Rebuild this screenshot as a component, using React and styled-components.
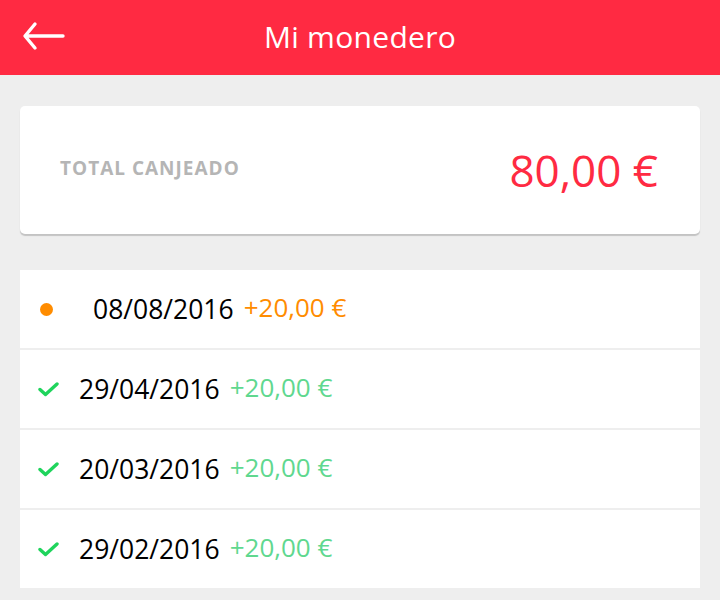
import React from 'react';
import styled, { createGlobalStyle } from 'styled-components';

const GlobalStyle = createGlobalStyle`
    html, body {
        margin: 0;
        padding: 0;
        background: #eeeeee;
    }
    body {
        font-family: "Open Sans", "Noto Sans", sans-serif;
    }
`;

const Page = styled.div`
    width: 720px;
    height: 600px;
    background: #eeeeee;
    overflow: hidden;
`;

const Header = styled.header`
    height: 75px;
    background: #ff2a42;
    display: flex;
    align-items: center;
    justify-content: center;
    position: relative;
`;

const BackButton = styled.button`
    position: absolute;
    left: 22px;
    top: 21px;
    padding: 0;
    border: 0;
    background: none;
    width: 44px;
    height: 30px;
    cursor: pointer;
`;

const Title = styled.h1`
    margin: 0 0 3px;
    color: #fff;
    font-weight: 400;
    font-size: 30px;
    letter-spacing: 0.3px;
`;

const Content = styled.main`
    padding: 31px 20px 0;
`;

const TotalCard = styled.section`
    height: 128px;
    background: #fff;
    border-radius: 5px;
    box-shadow: 0 2px 1px rgba(0, 0, 0, 0.18);
    display: flex;
    align-items: center;
    justify-content: space-between;
    padding: 0 40px;
`;

const TotalLabel = styled.span`
    color: #b5b5b5;
    font-weight: 700;
    font-size: 19px;
    letter-spacing: 1px;
    margin-bottom: 4px;
`;

const TotalValue = styled.span`
    color: #ff2a42;
    font-size: 44px;
    font-weight: 400;
    margin-right: 2px;
`;

const List = styled.ul`
    list-style: none;
    margin: 36px 0 0;
    padding: 0;
    display: flex;
    flex-direction: column;
    gap: 2px;
`;

const Row = styled.li`
    height: 78px;
    background: #fff;
    display: flex;
    align-items: center;
    padding-left: 18px;
`;

const StatusSlot = styled.span`
    width: ${p => (p.$pending ? '55px' : '41px')};
    display: flex;
    align-items: center;
`;

const Dot = styled.span`
    width: 13px;
    height: 13px;
    border-radius: 50%;
    background: #ff8c00;
    margin-left: 2px;
`;

const DateText = styled.span`
    color: #000;
    font-size: 26.5px;
`;

const Amount = styled.span`
    margin-left: 10px;
    font-size: 26px;
    color: ${p => (p.$pending ? '#ff8c00' : '#5fd88f')};
    position: relative;
    top: -2px;
`;

const movements = [
    { date: '08/08/2016', amount: '+20,00 €', pending: true },
    { date: '29/04/2016', amount: '+20,00 €' },
    { date: '20/03/2016', amount: '+20,00 €' },
    { date: '29/02/2016', amount: '+20,00 €' },
];

function Check() {
    return (
        <svg width="21" height="16" viewBox="0 0 21 16">
            <path d="M2 8.5 L7.5 13.5 L19 3" fill="none" stroke="#1fd45c" strokeWidth="3.4" strokeLinecap="round" strokeLinejoin="round" />
        </svg>
    );
}

export default function App() {
    return (
        <Page>
            <GlobalStyle />
            <Header>
                <BackButton aria-label="Volver">
                    <svg width="44" height="30" viewBox="0 0 44 30">
                        <path d="M41 15 H4 M13 3 L3 15 L13 27" fill="none" stroke="#fff" strokeWidth="3.4" strokeLinecap="round" strokeLinejoin="round" />
                    </svg>
                </BackButton>
                <Title>Mi monedero</Title>
            </Header>
            <Content>
                <TotalCard>
                    <TotalLabel>TOTAL CANJEADO</TotalLabel>
                    <TotalValue>80,00 €</TotalValue>
                </TotalCard>
                <List>
                    {movements.map(m => (
                        <Row key={m.date}>
                            <StatusSlot $pending={m.pending}>
                                {m.pending ? <Dot /> : <Check />}
                            </StatusSlot>
                            <DateText>{m.date}</DateText>
                            <Amount $pending={m.pending}>{m.amount}</Amount>
                        </Row>
                    ))}
                </List>
            </Content>
        </Page>
    );
}
